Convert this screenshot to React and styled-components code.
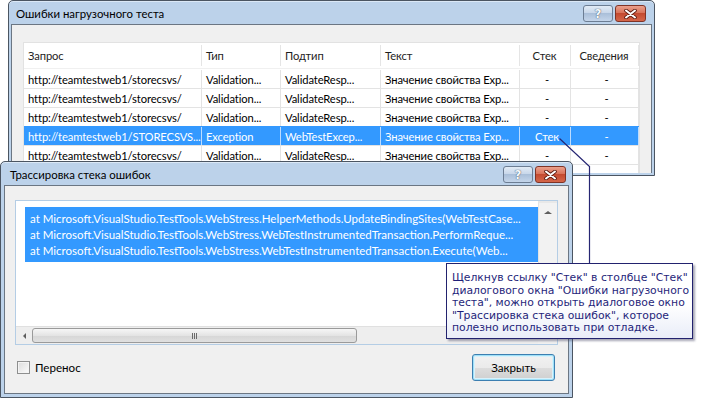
import React from "react";
import styled, { createGlobalStyle } from "styled-components";

const UI_FONT = `Lato, "Noto Sans", sans-serif`;

const GlobalStyle = createGlobalStyle`
  html, body {
    margin: 0;
    padding: 0;
    background: #ffffff;
  }
  body {
    font-family: ${UI_FONT};
    font-size: 11.2px;
    color: #000;
  }
`;

const columns = [
  { title: "Запрос", width: 178 },
  { title: "Тип", width: 79 },
  { title: "Подтип", width: 100 },
  { title: "Текст", width: 139 },
  { title: "Стек", width: 51, center: true },
  { title: "Сведения", width: 68, center: true },
];

const plainRow = [
  "http://teamtestweb1/storecsvs/",
  "Validation...",
  "ValidateResp...",
  "Значение свойства Exp...",
  "-",
  "-",
];

const rows = [
  { cells: plainRow },
  { cells: plainRow },
  { cells: plainRow },
  {
    selected: true,
    cells: [
      "http://teamtestweb1/STORECSVS...",
      "Exception",
      "WebTestExcep...",
      "Значение свойства Exp...",
      "Стек",
      "-",
    ],
  },
  { cells: plainRow },
  { cells: ["", "", "", "", "", ""] },
];

const stackLines = [
  "at Microsoft.VisualStudio.TestTools.WebStress.HelperMethods.UpdateBindingSites(WebTestCase...",
  "at Microsoft.VisualStudio.TestTools.WebStress.WebTestInstrumentedTransaction.PerformReque...",
  "at Microsoft.VisualStudio.TestTools.WebStress.WebTestInstrumentedTransaction.Execute(Web...",
];

const calloutLines = [
  'Щелкнув ссылку "Стек" в столбце "Стек"',
  'диалогового окна "Ошибки нагрузочного',
  'теста", можно открыть диалоговое окно',
  '"Трассировка стека ошибок", которое',
  "полезно использовать при отладке.",
];

const gridTemplate = columns.map((c) => `${c.width}px`).join(" ");

const App = () => {
  return (
    <>
      <GlobalStyle />
      <Desktop>
        <Window $left={8} $top={0} $width={647} $height={176} $frame={2}>
          <TitleBar $height={23} $pad={5}>
            <TitleText>Ошибки нагрузочного теста</TitleText>
            <CaptionButtons $right={6}>
              <HelpButton>?</HelpButton>
              <CloseButton>
                <CloseGlyph />
              </CloseButton>
            </CaptionButtons>
          </TitleBar>
          <BackClient>
            <ListView>
              <HeaderRow>
                {columns.map((c) => (
                  <HeaderCell key={c.title} $center={c.center}>
                    {c.title}
                  </HeaderCell>
                ))}
              </HeaderRow>
              {rows.map((r, i) => (
                <Row key={i} $selected={r.selected}>
                  {r.cells.map((text, j) => (
                    <Cell key={j} $center={columns[j].center} $selected={r.selected}>
                      {text}
                    </Cell>
                  ))}
                </Row>
              ))}
            </ListView>
          </BackClient>
        </Window>

        <Window $left={0} $top={161} $width={573} $height={237} $frame={3}>
          <TitleBar $height={23} $pad={6}>
            <TitleText>Трассировка стека ошибок</TitleText>
            <CaptionButtons $right={3}>
              <HelpButton>?</HelpButton>
              <CloseButton>
                <CloseGlyph />
              </CloseButton>
            </CaptionButtons>
          </TitleBar>
          <FrontClient>
            <TextBox>
              <TextContent>
                <Selection>
                  {stackLines.map((l) => (
                    <StackLine key={l}>{l}</StackLine>
                  ))}
                </Selection>
              </TextContent>
              <VScroll>
                <ArrowUp />
              </VScroll>
              <HScroll>
                <ArrowLeft />
                <Thumb>
                  <Grip />
                </Thumb>
              </HScroll>
              <Corner />
            </TextBox>
            <Footer>
              <CheckLabel>
                <CheckBox />
                Перенос
              </CheckLabel>
              <DefaultButton>Закрыть</DefaultButton>
            </Footer>
          </FrontClient>
        </Window>

        <Leader width="702" height="400">
          <polyline
            points="559.5,138.5 589.5,166.5 589.5,263"
            fill="none"
            stroke="#262673"
            strokeWidth="1.2"
          />
        </Leader>

        <Callout>
          {calloutLines.map((l) => (
            <CalloutLine key={l}>{l}</CalloutLine>
          ))}
        </Callout>
      </Desktop>
    </>
  );
};

const CloseGlyph = () => (
  <svg width="13" height="10" viewBox="0 0 13 10">
    <path
      d="M2 1.5 L11 8.5 M11 1.5 L2 8.5"
      stroke="#5a1a10"
      strokeWidth="3.6"
      strokeLinecap="round"
    />
    <path
      d="M2 1.5 L11 8.5 M11 1.5 L2 8.5"
      stroke="#ffffff"
      strokeWidth="2"
      strokeLinecap="round"
    />
  </svg>
);

const Desktop = styled.div`
  position: relative;
  width: 702px;
  height: 400px;
  overflow: hidden;
  background: #fff;
`;

const Window = styled.div`
  position: absolute;
  left: ${(p) => p.$left}px;
  top: ${(p) => p.$top}px;
  width: ${(p) => p.$width}px;
  height: ${(p) => p.$height}px;
  box-sizing: border-box;
  display: flex;
  flex-direction: column;
  border: 1px solid #4b5562;
  border-radius: 5px 5px 0 0;
  padding: 0 ${(p) => p.$frame}px ${(p) => p.$frame}px;
  background: #bcd2ea;
  box-shadow: inset 0 1px 0 #dbe8f6;
`;

const TitleBar = styled.div`
  height: ${(p) => p.$height}px;
  flex: none;
  display: flex;
  align-items: center;
  justify-content: space-between;
  padding-left: ${(p) => p.$pad}px;
`;

const TitleText = styled.span`
  font-size: 11.4px;
  color: #000;
  padding-top: 1px;
`;

const CaptionButtons = styled.div`
  display: flex;
  gap: 2px;
  margin-right: ${(p) => p.$right}px;
  align-self: flex-start;
  margin-top: 4px;
`;

const CaptionButton = styled.div`
  height: 15px;
  box-sizing: content-box;
  border-radius: 3px;
  display: flex;
  align-items: center;
  justify-content: center;
`;

const HelpButton = styled(CaptionButton)`
  width: 28px;
  border: 1px solid #6c7d93;
  background: linear-gradient(#e2ebf5 0%, #c8d7ea 45%, #aabfd9 50%, #c4d5ea 100%);
  color: #f6f9fc;
  font-family: "DejaVu Sans", sans-serif;
  font-weight: bold;
  font-size: 12px;
  text-shadow: 0 0 1px #4d5d72, 0 0 1px #4d5d72;
`;

const CloseButton = styled(CaptionButton)`
  width: 29px;
  border: 1px solid #7f3326;
  background: linear-gradient(#eaa08d 0%, #d9735a 45%, #c44a30 50%, #d4664a 100%);
`;

const BackClient = styled.div`
  flex: 1;
  min-height: 0;
  background: #f0f0f0;
  border: 1px solid #6b7683;
  border-bottom: none;
  padding: 17px 11px 0 11px;
  overflow: hidden;
`;

const ListView = styled.div`
  background: #fff;
  border: 1px solid #e2e2e2;
  border-bottom: none;
  height: 200px;
  letter-spacing: -0.1px;
`;

const HeaderRow = styled.div`
  display: grid;
  grid-template-columns: ${gridTemplate};
  height: 25px;
  border-bottom: 1px solid #f0f0f0;
`;

const HeaderCell = styled.div`
  display: flex;
  align-items: center;
  justify-content: ${(p) => (p.$center ? "center" : "flex-start")};
  padding: 0 5px 0 4px;
  margin: 2px 0;
  border-right: 1px solid #e5e5e5;
  color: #1e1e1e;
  white-space: nowrap;
  overflow: hidden;
`;

const Row = styled.div`
  display: grid;
  grid-template-columns: ${gridTemplate};
  height: 18px;
  background: ${(p) => (p.$selected ? "#3399ff" : "#fff")};
  border-top: 1px solid ${(p) => (p.$selected ? "#3399ff" : "#e3e3e3")};
  &:nth-child(2) {
    border-top-color: #fff;
  }
`;

const Cell = styled.div`
  display: flex;
  align-items: center;
  justify-content: ${(p) => (p.$center ? "center" : "flex-start")};
  padding: 0 0 0 4px;
  border-right: 1px solid ${(p) => (p.$selected ? "#bcdcff" : "#e3e3e3")};
  color: ${(p) => (p.$selected ? "#fff" : "#000")};
  white-space: nowrap;
  overflow: hidden;
`;

const FrontClient = styled.div`
  flex: 1;
  min-height: 0;
  background: #f0f0f0;
  border: 1px solid #6b7683;
  padding: 14px 10px 12px 10px;
  display: flex;
  flex-direction: column;
`;

const TextBox = styled.div`
  height: 147px;
  box-sizing: border-box;
  border: 1px solid #b4cde5;
  background: #fff;
  display: grid;
  grid-template-columns: 1fr 19px;
  grid-template-rows: 1fr 18px;
`;

const TextContent = styled.div`
  padding: 6px 0 0 9px;
  overflow: hidden;
`;

const Selection = styled.div`
  background: #3399ff;
  padding: 4px 0 3px 5px;
`;

const StackLine = styled.div`
  color: #fff;
  font-size: 11.5px;
  line-height: 16px;
  white-space: nowrap;
`;

const VScroll = styled.div`
  background: #f2f2f2;
  border-left: 1px solid #e3e3e3;
  border-top: 2px solid #e8e8e8;
  display: flex;
  justify-content: center;
  padding-top: 8px;
`;

const ArrowUp = styled.div`
  width: 0;
  height: 0;
  border-left: 4px solid transparent;
  border-right: 4px solid transparent;
  border-bottom: 3px solid #5e5e5e;
`;

const HScroll = styled.div`
  background: #eeeeee;
  border-top: 1px solid #e0e0e0;
  display: flex;
  align-items: center;
  padding-left: 7px;
  gap: 6px;
`;

const ArrowLeft = styled.div`
  width: 0;
  height: 0;
  border-top: 3px solid transparent;
  border-bottom: 3px solid transparent;
  border-right: 3px solid #5e5e5e;
`;

const Thumb = styled.div`
  width: 325px;
  height: 15px;
  box-sizing: border-box;
  border: 1px solid #9a9a9a;
  border-radius: 3px;
  background: linear-gradient(#f6f6f6, #e4e4e4 50%, #d6d6d6 51%, #e0e0e0);
  display: flex;
  align-items: center;
  justify-content: center;
`;

const Grip = styled.div`
  width: 5px;
  height: 6px;
  background: repeating-linear-gradient(90deg, #6a6a6a 0 1px, transparent 1px 2px);
`;

const Corner = styled.div`
  background: #f0f0f0;
`;

const Footer = styled.div`
  display: flex;
  align-items: center;
  justify-content: space-between;
  margin-top: 9px;
  padding: 0 3px 0 2px;
`;

const CheckLabel = styled.label`
  display: flex;
  align-items: center;
  gap: 5px;
  color: #000;
  font-size: 11.6px;
`;

const CheckBox = styled.span`
  width: 11px;
  height: 11px;
  border: 1px solid #8e8f8f;
  background: linear-gradient(135deg, #dcdcdc, #fbfbfb);
  box-shadow: inset 0 0 0 1px #f4f4f4;
`;

const DefaultButton = styled.button`
  width: 83px;
  height: 27px;
  font-family: ${UI_FONT};
  font-size: 11.6px;
  color: #000;
  border: 1px solid #3c7fb1;
  border-radius: 3px;
  background: linear-gradient(#f2f2f2 0%, #ebebeb 50%, #dddddd 51%, #cfcfcf 100%);
  box-shadow: inset 0 0 0 1px #9fe0f7, inset 0 0 0 2px #d8f1fb;
  padding: 0;
`;

const Leader = styled.svg`
  position: absolute;
  left: 0;
  top: 0;
  pointer-events: none;
`;

const Callout = styled.div`
  position: absolute;
  left: 446px;
  top: 263px;
  width: 247px;
  height: 76px;
  box-sizing: border-box;
  border: 1px solid #22226e;
  background: linear-gradient(#ffffff 0%, #ffffff 55%, #e9edf8 100%);
  box-shadow: 2px 2px 2px rgba(60, 60, 90, 0.45);
  padding: 8px 3px 0 5px;
  font-family: "DejaVu Sans", Verdana, sans-serif;
  font-size: 10.8px;
  line-height: 12.5px;
  color: #1f1f7a;
`;

const CalloutLine = styled.div`
  white-space: nowrap;
`;

export default App;
